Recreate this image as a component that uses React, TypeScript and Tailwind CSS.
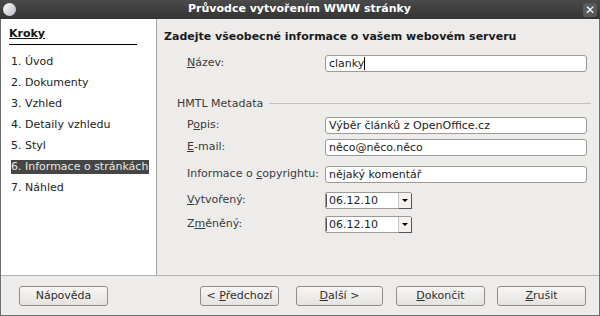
import { ReactNode } from "react";

const steps = [
    "1. Úvod",
    "2. Dokumenty",
    "3. Vzhled",
    "4. Detaily vzhledu",
    "5. Styl",
    "6. Informace o stránkách",
    "7. Náhled",
];

const Field = ({ label, value, cursor }: { label: ReactNode; value: string; cursor?: boolean }) => (
    <div className="flex items-center h-[17px]">
        <div className="w-[138px] text-[#3a3a3a]">{label}</div>
        <div className="flex-1 h-[17px] bg-white border border-[#9c9a94] rounded-[3px] px-[3px] flex items-center text-[#222] leading-none">
            {value}
            {cursor && <span className="w-px h-[13px] bg-black" />}
        </div>
    </div>
);

const DateField = ({ label }: { label: ReactNode }) => (
    <div className="flex items-center h-[17px]">
        <div className="w-[138px] text-[#3a3a3a]">{label}</div>
        <div className="w-[87px] h-[17px] bg-white border border-[#9c9a94] rounded-[2px] flex items-center">
            <div className="flex-1 px-[2px] text-[#222] leading-none border-l border-[#555] h-[13px] flex items-center">06.12.10</div>
            <div className="w-[13px] h-[15px] bg-[#f2f1ef] border-l border-[#c8c6c2] shadow-[1px_1px_0_#555] flex items-center justify-center">
                <span className="w-0 h-0 border-l-[3px] border-r-[3px] border-t-[3px] border-l-transparent border-r-transparent border-t-black" />
            </div>
        </div>
    </div>
);

const Btn = ({ children, w }: { children: ReactNode; w: string }) => (
    <button className={`${w} h-[20px] rounded-[3px] border border-[#8f8d88] bg-gradient-to-b from-[#f7f6f5] to-[#e6e4e1] text-[#2e2e2e] text-[11px] leading-none`}>
        {children}
    </button>
);

const App = () => {
    return (
        <div className="w-[600px] h-[316px] flex flex-col bg-[#edeceb] text-[11px]" style={{ fontFamily: '"DejaVu Sans", sans-serif' }}>
            <div className="h-[19px] bg-gradient-to-b from-[#4a4a4a] to-[#343434] flex items-center px-[3px] relative">
                <div className="w-[13px] h-[13px] rounded-full bg-gradient-to-br from-white to-[#b8b8c4]" />
                <div className="flex-1 text-center text-white font-bold text-[11px]">Průvodce vytvořením WWW stránky</div>
                <div className="w-[14px] h-[14px] rounded-[3px] bg-[#5a5a5a] text-white font-bold text-[12px] leading-[14px] text-center">✕</div>
            </div>
            <div className="flex-1 flex flex-col border-x border-b border-[#6f6f6f]">
                <div className="flex flex-1 border-b border-[#b6b4b0]">
                    <div className="w-[156px] bg-white border-r border-[#a8a6a2] pt-[7px]">
                        <div className="ml-[8px] mr-[19px] border-b border-black pb-[1px]">
                            <span className="font-bold underline text-[#111]">Kroky</span>
                        </div>
                        <div className="flex flex-col mt-[10px] gap-[7px] pl-[10px] pr-[7px]">
                            {steps.map((s, i) => (
                                <div key={s} className={`h-[14px] leading-[14px] ${i === 5 ? "bg-[#464646] text-[#e8e8e8]" : "text-[#222]"}`}>
                                    {s}
                                </div>
                            ))}
                        </div>
                    </div>
                    <div className="flex-1 pl-[7px] pr-[12px] pt-[10px]">
                        <div className="font-bold text-[#1a1a1a]">Zadejte všeobecné informace o vašem webovém serveru</div>
                        <div className="ml-[23px] mt-[9px]">
                            <Field label={<><u>N</u>ázev:</>} value="clanky" cursor />
                        </div>
                        <div className="flex items-center mt-[24px] ml-[13px] gap-[6px]">
                            <span className="text-[#3a3a3a]">HMTL Metadata</span>
                            <div className="flex-1 border-t border-[#c4c2be] mr-[-4px]" />
                        </div>
                        <div className="ml-[23px] mt-[5px] flex flex-col gap-[5px]">
                            <Field label={<>P<u>o</u>pis:</>} value="Výběr článků z OpenOffice.cz" />
                            <Field label={<><u>E</u>-mail:</>} value="něco@něco.něco" />
                            <div className="mt-[5px]">
                                <Field label={<>Informace o <u>c</u>opyrightu:</>} value="nějaký komentář" />
                            </div>
                            <div className="mt-[4px] flex flex-col gap-[7px]">
                                <DateField label={<><u>V</u>ytvořený:</>} />
                                <DateField label={<>Z<u>m</u>ěněný:</>} />
                            </div>
                        </div>
                    </div>
                </div>
                <div className="h-[39px] flex items-center pl-[18px] pr-[13px]">
                    <Btn w="w-[89px]">Nápověda</Btn>
                    <div className="flex-1" />
                    <Btn w="w-[79px]">&lt; <u>P</u>ředchozí</Btn>
                    <div className="w-[17px]" />
                    <Btn w="w-[87px]"><u>D</u>alší &gt;</Btn>
                    <div className="w-[13px]" />
                    <Btn w="w-[89px]"><u>D</u>okončit</Btn>
                    <div className="w-[12px]" />
                    <Btn w="w-[89px]"><u>Z</u>rušit</Btn>
                </div>
            </div>
        </div>
    );
};

export default App;
